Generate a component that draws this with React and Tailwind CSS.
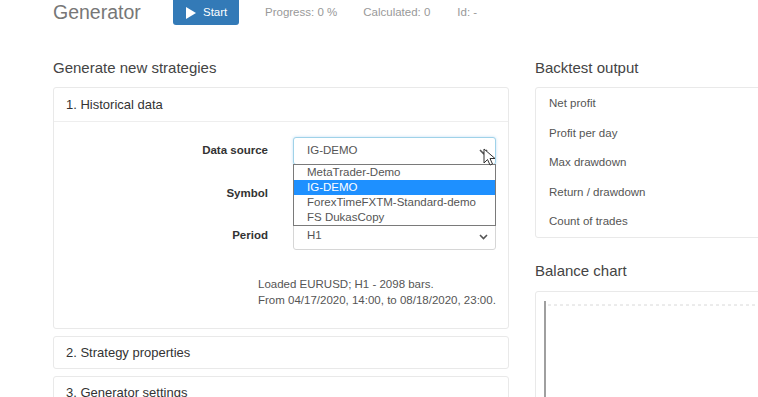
import React from "react";

const Panel = ({ title, children, className = "" }) => (
  <div className={`border border-[#e9e9e9] rounded-[3px] bg-white ${className}`}>
    {title && (
      <div className="h-[34px] flex items-center pl-[12px] text-[13px] text-[#333] border-b border-[#eeeeee]">
        {title}
      </div>
    )}
    {children}
  </div>
);

const Chevron = () => (
  <svg width="9" height="6" viewBox="0 0 9 6" className="absolute right-[8px] top-[12px]">
    <path d="M1 1 L4.5 4.5 L8 1" fill="none" stroke="#555" strokeWidth="1.6" />
  </svg>
);

const Select = ({ value, focused, children }) => (
  <div className="relative w-[203px] h-[28px]">
    <div
      className={`h-full flex items-center pl-[13px] rounded-[3px] border text-[11.5px] text-[#555] bg-white ${
        focused ? "border-[#9fd2e8] shadow-[0_0_3px_rgba(102,175,233,0.4)]" : "border-[#d6d6d6]"
      }`}
    >
      {value}
    </div>
    <Chevron />
    {children}
  </div>
);

const FormRow = ({ label, children }) => (
  <div className="flex items-center h-[28px]">
    <div className="w-[214px] text-right text-[11.5px] font-bold text-[#333]">{label}</div>
    <div className="ml-[25px]">{children}</div>
  </div>
);

const sources = ["MetaTrader-Demo", "IG-DEMO", "ForexTimeFXTM-Standard-demo", "FS DukasCopy"];

const outputRows = ["Net profit", "Profit per day", "Max drawdown", "Return / drawdown", "Count of trades"];

export default function App() {
  return (
    <div className="w-[758px] h-[397px] overflow-hidden bg-white font-['Liberation_Sans',Arial,sans-serif]">
      {/* top bar */}
      <div className="flex items-center h-[25px] pl-[53px]">
        <div className="w-[120px] text-[19.5px] leading-none text-[#777]">Generator</div>
        <button className="w-[66px] h-[25px] bg-[#337ab7] rounded-b-[3px] flex items-center pl-[13px] text-white text-[11.5px]">
          <svg width="10" height="12" viewBox="0 0 10 12" className="mr-[7px]">
            <path d="M0 0 L10 6 L0 12 Z" fill="#fff" />
          </svg>
          Start
        </button>
        <div className="ml-[26px] text-[11.5px] text-[#999]">Progress: 0 %</div>
        <div className="ml-[26px] text-[11.5px] text-[#999]">Calculated: 0</div>
        <div className="ml-[27px] text-[11.5px] text-[#999]">Id: -</div>
      </div>

      <div className="flex gap-[26px] pl-[53px] mt-[33px]">
        {/* left column */}
        <div className="w-[456px] shrink-0">
          <div className="h-[20px] flex items-center text-[15px] text-[#444] mb-[9px]">Generate new strategies</div>
          <Panel title="1. Historical data">
            <div className="pt-[15px] pb-[20px]">
              <div className="flex flex-col gap-[14.5px]">
                <FormRow label="Data source">
                  <Select value="IG-DEMO" focused>
                    <svg width="14" height="20" viewBox="0 0 14 20" className="absolute left-[190px] top-[11px] z-20">
                      <path d="M1 1 L1 15 L4.5 11.5 L7 17 L9.5 16 L7 10.5 L12 10.5 Z" fill="#fff" stroke="#333" strokeWidth="1" />
                    </svg>
                    <div className="absolute left-0 top-[27px] w-[203px] bg-white border border-[#7a7a7a] z-10">
                      {sources.map((s) => (
                        <div
                          key={s}
                          className={`h-[15px] flex items-center pl-[13px] text-[11.5px] ${
                            s === "IG-DEMO" ? "bg-[#1e90ff] text-white" : "text-[#555]"
                          }`}
                        >
                          {s}
                        </div>
                      ))}
                    </div>
                  </Select>
                </FormRow>
                <FormRow label="Symbol">
                  <Select value="" />
                </FormRow>
                <FormRow label="Period">
                  <Select value="H1" />
                </FormRow>
              </div>
              <div className="mt-[26px] pl-[204px] text-[11.5px] leading-[16px] text-[#555]">
                <div>Loaded EURUSD; H1 - 2098 bars.</div>
                <div>From 04/17/2020, 14:00, to 08/18/2020, 23:00.</div>
              </div>
            </div>
          </Panel>
          <Panel className="mt-[7px]">
            <div className="h-[31px] flex items-center pl-[12px] text-[13px] text-[#333]">2. Strategy properties</div>
          </Panel>
          <Panel className="mt-[7px]">
            <div className="h-[31px] flex items-center pl-[12px] text-[13px] text-[#333]">3. Generator settings</div>
          </Panel>
        </div>

        {/* right column */}
        <div className="w-[260px] shrink-0">
          <div className="h-[20px] flex items-center text-[15px] text-[#444] mb-[9px]">Backtest output</div>
          <Panel className="pt-[1px]">
            {outputRows.map((r) => (
              <div key={r} className="h-[29.5px] flex items-center pl-[13px] text-[11.5px] text-[#555]">
                {r}
              </div>
            ))}
          </Panel>
          <div className="h-[20px] flex items-center text-[15px] text-[#444] mt-[24px] mb-[9px]">Balance chart</div>
          <Panel className="h-[140px]">
            <svg width="258" height="120" className="block">
              <line x1="9" y1="9" x2="9" y2="120" stroke="#888" strokeWidth="1.6" />
              <line x1="12" y1="13" x2="258" y2="13" stroke="#d8d8d8" strokeWidth="1" strokeDasharray="3 3" />
            </svg>
          </Panel>
        </div>
      </div>
    </div>
  );
}
